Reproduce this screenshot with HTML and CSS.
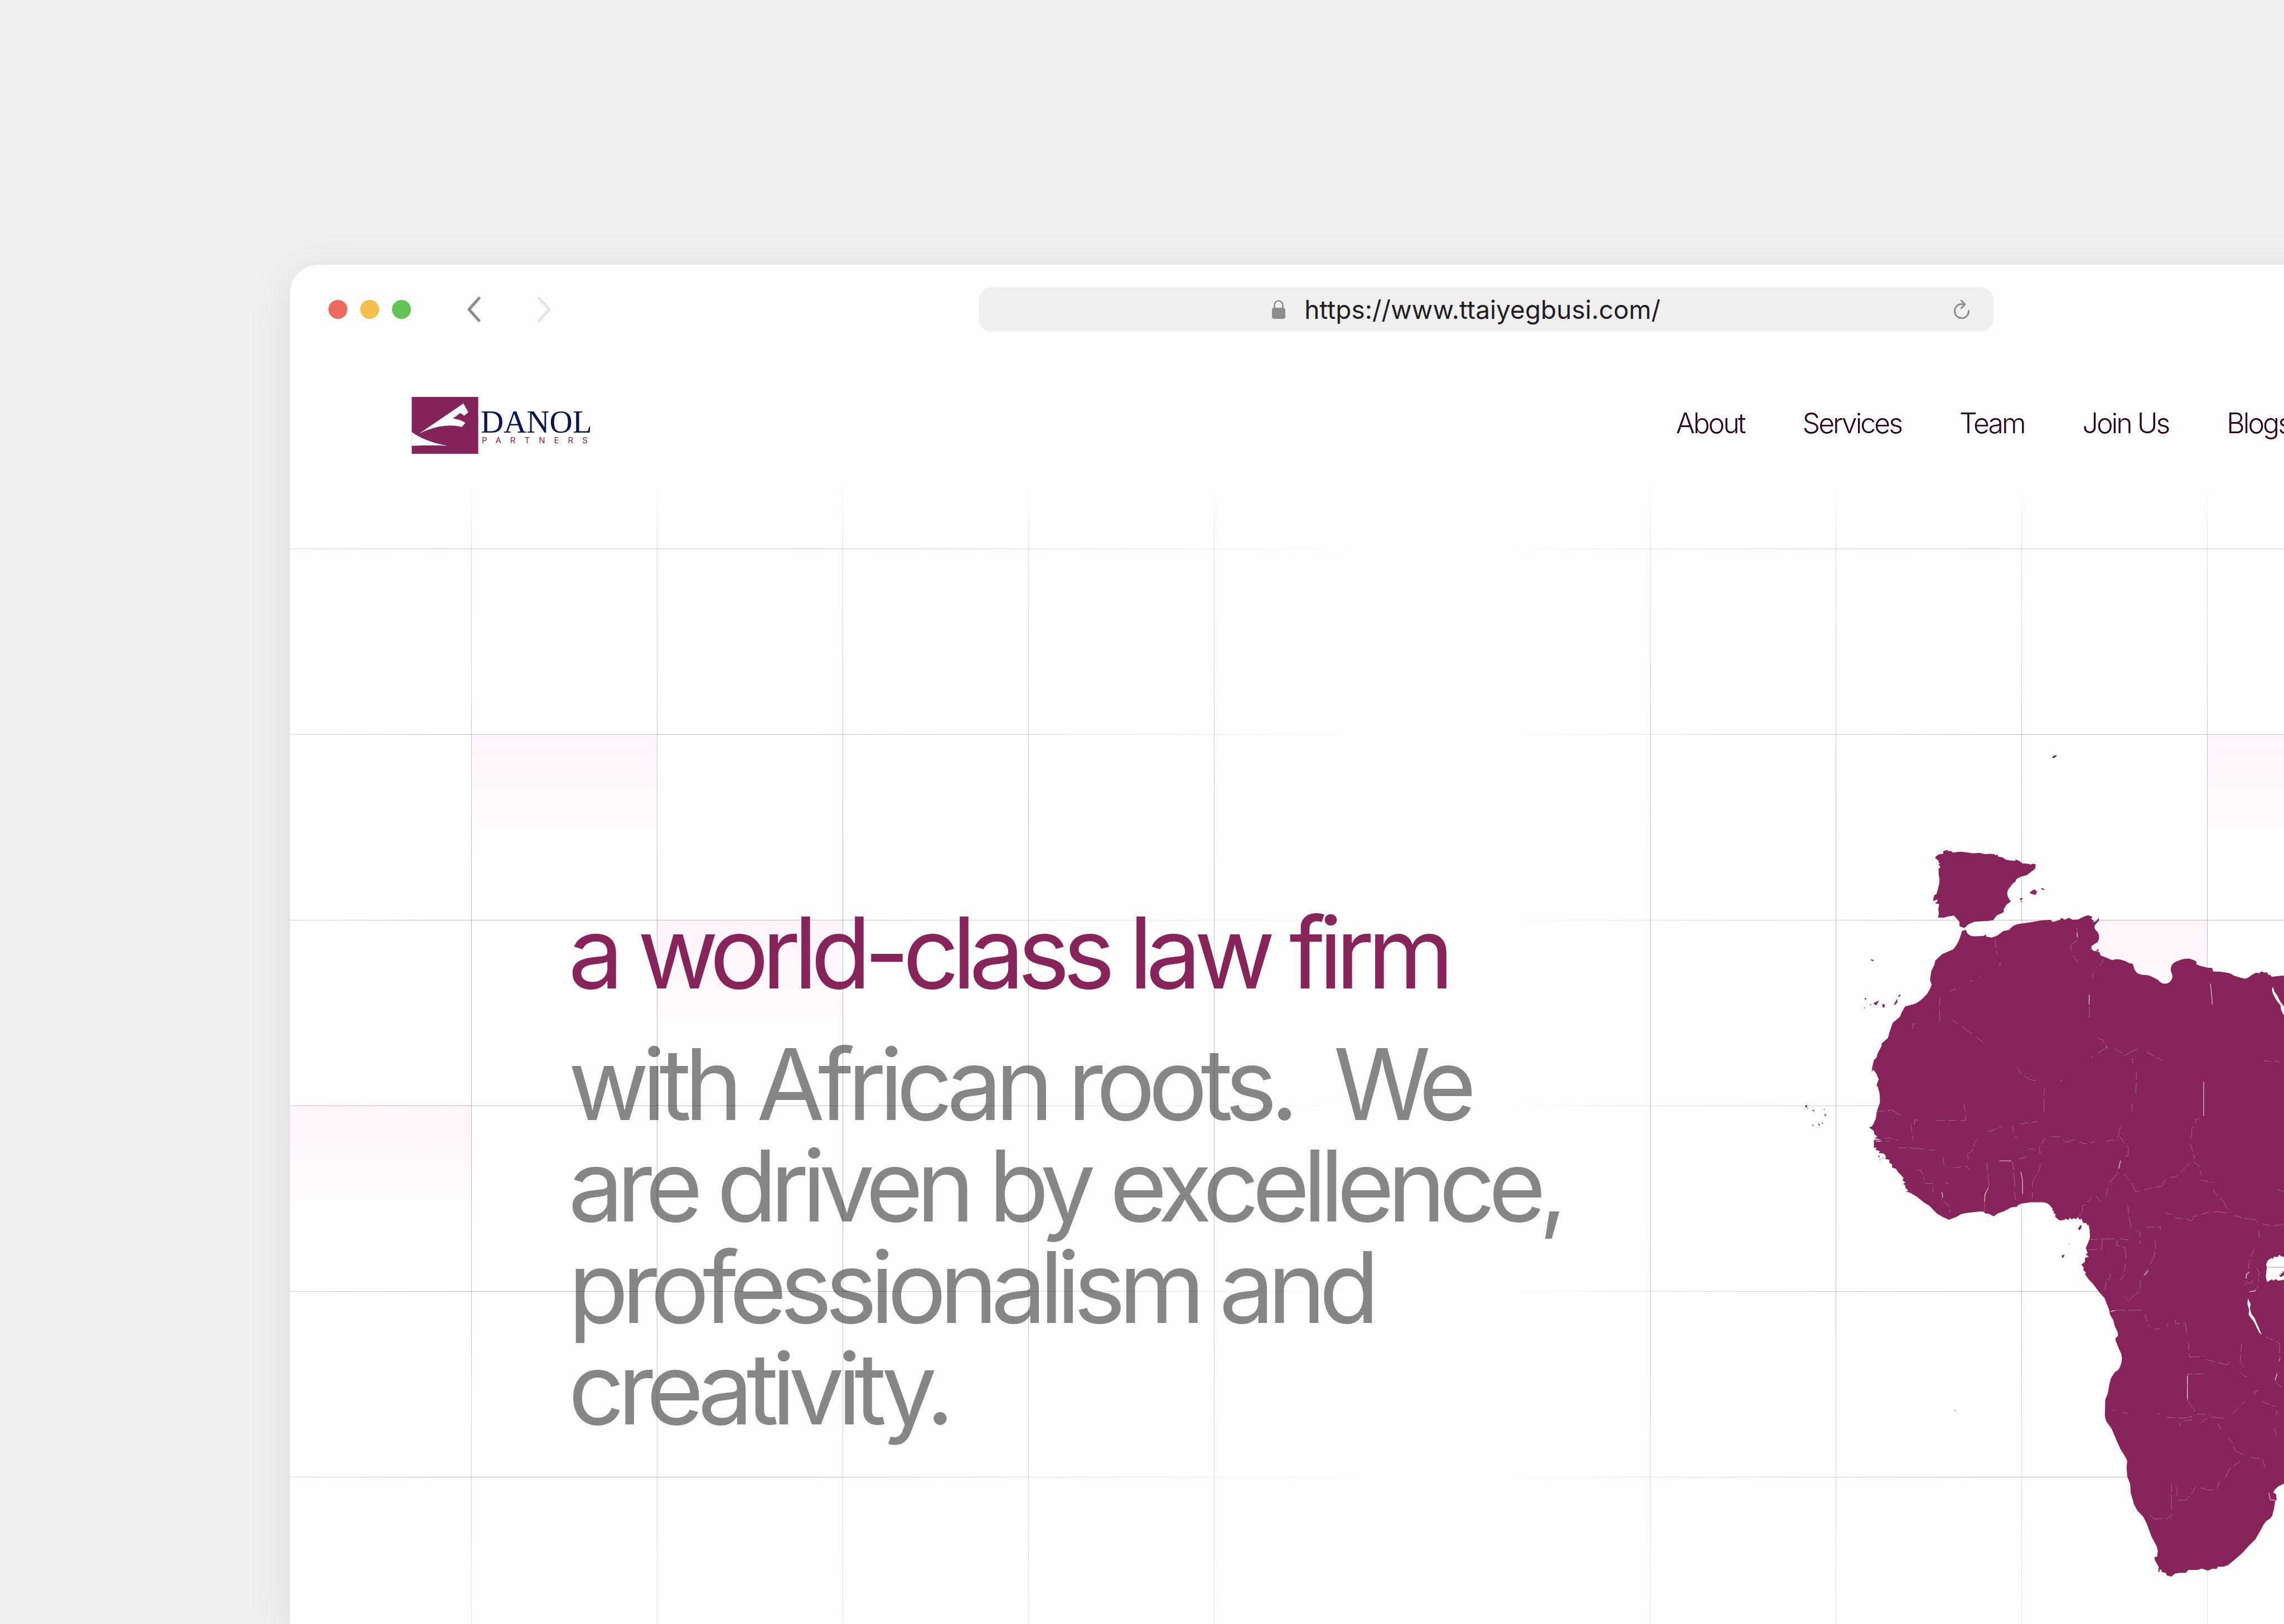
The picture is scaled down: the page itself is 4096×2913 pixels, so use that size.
FILE: index.html
```html
<!DOCTYPE html>
<html lang="en">
<head>
<meta charset="utf-8">
<title>Danol Partners</title>
<link rel="stylesheet" href="styles.css">
</head>
<body>
<div class="browser">
  <div class="toolbar">
    <div class="controls">
      <span class="light light-close"></span>
      <span class="light light-min"></span>
      <span class="light light-max"></span>
      <button class="chevron chevron-back" aria-label="Back">
        <svg viewBox="0 0 26 46" width="26" height="46"><path d="M22 3 4 23 22 43"/></svg>
      </button>
      <button class="chevron chevron-forward" aria-label="Forward">
        <svg viewBox="0 0 26 46" width="26" height="46"><path d="M4 3 22 23 4 43"/></svg>
      </button>
    </div>
    <div class="address">
      <div class="url">
        <svg class="lock" viewBox="0 0 24 34" width="24" height="34"><path d="M4.500 15V9.500a7.500 8 0 0 1 15 0V15" fill="none" stroke="#8d8d8d" stroke-width="2.600"/><rect y="14" width="24" height="20" rx="4" fill="#8d8d8d"/></svg>
        <span>https://www.ttaiyegbusi.com/</span>
      </div>
      <button class="reload" aria-label="Reload">
        <svg viewBox="0 0 28 34" width="28" height="34"><path d="M26.500 19.500A12.600 12.600 0 1 1 14 7.500L20 8M13.300 1.300 20 8l-6.700 6.700"/></svg>
      </button>
    </div>
  </div>

  <header class="header">
    <a class="logo" href="#">
      <svg viewBox="57 62 504 431" width="120" height="102">
        <path fill="#85245a" d="M57 62h504v431H57z"/>
        <path fill="#fff" d="M449 112 486 178 454 205 425 183 368 227C402 230 438 240 463 259L436 290C350 262 220 285 113 340ZM57 327C120 375 215 412 327 432 240 428 140 429 57 432Z"/>
      </svg>
      <span class="wordmark">
        <span class="wordmark-name">DANOL</span>
        <span class="wordmark-sub">PARTNERS</span>
      </span>
    </a>
    <nav class="nav">
      <a href="#">About</a>
      <a href="#">Services</a>
      <a href="#">Team</a>
      <a href="#">Join Us</a>
      <a href="#">Blogs</a>
    </nav>
  </header>

  <div class="backdrop">
    <div class="grid grid-left">
      <i class="cell cell-a"></i><i class="cell cell-b"></i><i class="cell cell-c"></i>
      <i class="rows"></i><i class="cols"></i>
    </div>
    <div class="grid grid-right">
      <i class="cell cell-d"></i><i class="cell cell-e"></i>
      <i class="rows"></i><i class="cols"></i>
    </div>
  </div>

  <main class="hero">
    <div class="hero-text">
      <h1>a world-class law firm</h1>
      <p>with African roots. &nbsp;We are driven by excellence, professionalism and creativity.</p>
    </div>
    <svg class="map" viewBox="0 0 1568 2700" role="img" aria-label="Map of Africa">
      <g fill="#87255b">
        <path d="M499 368 505 367 512 365 514 369 522 368 529 373 545 371 560 371 594 376 613 374 628 378 645 377 661 379 662 383 668 379 671 386 684 388 694 395 710 398 724 399 727 395 740 401 746 407 770 409 772 412 778 408 789 410 787 424 774 434 761 444 743 449 734 453 727 458 725 465 718 469 708 482Q696 494 701 510L705 519 711 526 696 538 688 553 689 560 666 571 655 586 638 588 597 590 578 598 565 610 550 605 549 590 543 583 532 571 512 574 500 578 482 577 485 565 483 550 486 535 475 533 474 529 480 528 480 520 468 526 467 518 471 506 477 504 480 495 486 470 487 457 484 440 484 425 490 417 483 412 488 408 483 403 485 400 478 394 473 390 475 386 484 379 498 377Z"/>
        <path d="M557 620 569 615 574 626C583 636 590 636 600 636L626 635 632 630 634 637 650 640C665 636 671 633 676 628L686 620 705 616C716 603 723 600 735 597L775 592 800 587 835 584 842 591 865 585 868 578 880 584 893 578 904 584 922 583 940 574 953 570 962 573 967 575 963 581 971 587 969 593 980 587 986 578 988 586 977 598C970 607 974 614 980 620 990 628 990 645 982 655L966 665C960 672 965 680 972 682L983 683 990 688 992 696 1010 703 1029 711C1045 704 1058 710 1070 714L1082 720 1092 722C1097 728 1096 738 1102 745 1110 758 1125 757 1140 758 1152 761 1162 767 1173 773 1182 785 1195 788 1206 782 1215 775 1220 765 1217 757L1213 745C1211 728 1220 718 1235 713 1252 706 1270 704 1280 709L1292 714 1294 725 1310 730 1330 735 1342 735 1346 747C1365 746 1385 749 1398 752L1412 760 1432 766 1446 769C1458 768 1464 757 1474 754L1480 750 1490 752 1497 746 1505 750 1514 749 1519 757 1524 757 1530 763 1568 759V2354L1550 2363 1540 2372 1534 2382 1543 2387 1545 2406 1540 2410 1537 2431 1531 2455 1525 2463 1512 2472 1503 2484 1495 2500 1478 2529 1455 2552 1438 2571 1413 2593 1392 2610 1378 2615 1360 2615 1357 2622 1343 2621 1330 2627 1310 2621 1297 2625 1268 2625 1260 2634 1240 2634 1225 2637 1215 2646 1200 2642 1197 2634 1185 2632 1183 2624 1177 2624 1178 2633 1173 2629 1175 2616 1163 2595 1161 2585 1170 2583 1172 2564 1168 2550 1152 2520 1142 2493 1138 2481 1126 2458 1108 2439 1097 2419 1092 2400 1087 2384 1085 2355 1076 2332 1074 2303 1076 2282 1070 2270 1055 2246 1043 2220 1027 2182 1010 2158Q1005 2145 1006 2130L1007 2090 1015 2071 1020 2042 1025 2023 1037 2004 1048 1997C1062 1976 1062 1952 1053 1938L1043 1914 1038 1899 1047 1890 1046 1879 1036 1857 1032 1840 1022 1824 1018 1805 1010 1786 1005 1772 988 1753 970 1729 955 1713 943 1696 947 1692 938 1684 940 1677 932 1667 943 1658 944 1645 955 1642 946 1634 952 1630 946 1615 954 1596 959 1582 958 1558 955 1542 950 1543 948 1536 938 1536 932 1521 928 1527 920 1517 918 1523 905 1521 903 1526 896 1519 892 1527 882 1522 880 1526 864 1528 850 1517 851 1507 844 1505 847 1498 841 1498 842 1490 838 1487C830 1473 815 1470 805 1471L775 1471 745 1475 733 1480 730 1485 712 1487 690 1499 670 1506 657 1515 642 1507 630 1506 625 1500 610 1500 575 1504 555 1508 540 1517 516 1526 495 1516 478 1506 455 1482 437 1471 415 1453 395 1441 381 1437 389 1435 380 1425 378 1416 372 1413 380 1409 371 1402 374 1395 366 1385 357 1377 350 1366 338 1362 338 1352 329 1346 330 1338 317 1335 318 1325 312 1318 295 1316 301 1311 286 1306 290 1300 281 1300 281 1275 305 1274 283 1270 292 1265 283 1258 280 1246 265 1236 272 1234 278 1228 287 1208 290 1185 300 1158 299 1130 293 1108 289 1104 296 1085 288 1066 279 1055 274 1062 276 1045 281 1024 290 1016 292 1005 305 980 305 973 325 955 332 930 340 908 363 888 368 875 379 856 410 848C435 835 456 812 462 787L457 773 461 745 470 727 474 712 495 692 530 677C545 660 552 640 557 620Z"/>
        <path d="M839 75 846 69 855 67 853 72 845 77ZM769 499 780 491 789 489 788 494 794 495 788 506 777 503ZM805 485 814 486 816 491 808 489ZM739 518 748 515 746 521 740 523ZM742 525h3v3h-3ZM271 708 281 711 279 714 272 712ZM251 829 257 831 255 838ZM249 860 253 859 252 863ZM268 849 273 849 271 853ZM279 846 298 837 288 853ZM306 852 313 848 316 856 311 861ZM343 851 354 832 355 842 349 850ZM356 827 361 819 366 821 360 826ZM978 678 987 677 985 684ZM65 1169 70 1165 72 1170 68 1175ZM72 1175h3v2h-3ZM87 1181 97 1183 90 1185ZM124 1176 127 1180 124 1182ZM126 1192 132 1197 127 1201ZM86 1228 91 1227 90 1233ZM105 1222 112 1227 109 1231ZM118 1221h3v4h-3ZM921 1555 928 1544 933 1543 932 1551 927 1559ZM871 1637 879 1636 876 1644 871 1646ZM894 1600 896 1602 895 1605ZM293 1325 301 1326 296 1330ZM298 1337 303 1336 299 1339ZM308 1327 310 1333 308 1336Z"/>
        <path d="M534 2123 536 2122 536 2126 534 2126Z"/>
      </g>
      <g fill="#fff">
        <path d="M1533 794 1530 804 1534 818 1545 838 1557 853 1559 867 1568 885V856L1557 842 1547 822 1538 810Z"/>
        <path d="M1518 1653 1528 1646 1533 1649 1536 1642 1548 1643 1553 1636 1560 1641 1568 1642V1688L1563 1688 1565 1693 1557 1694 1560 1698 1552 1700 1558 1706 1568 1700V1714L1550 1717 1542 1712 1535 1717 1530 1713 1515 1721 1511 1706 1514 1675 1512 1665Z"/>
        <path d="M1455 1772 1463 1791 1461 1805 1466 1822 1475 1833 1483 1852 1498 1886 1490 1880 1475 1848 1457 1824 1459 1808 1453 1790Z"/>
        <path d="M1021 1815 1030 1811 1043 1810 1028 1814Z"/>
      </g>
      <path d="M1480 1675H1568" stroke="#87255b" stroke-width="1"/>
      <g class="borders">
        <path d="M663 645 662 660 665 680 667 692M679 718 675 730M616 765 612 762M582 779 590 776M515 812 525 805 553 799M488 830 487 865 488 905M403 928 403 912 415 911M525 898 590 943 632 976M918 612 920 635 917 650 900 662 898 675 908 700 928 724M1000 707 998 720 978 736M968 750 967 770M957 820 957 890M983 955 1000 962 1012 985 962 1017M1038 990 1070 1010 1090 998 1110 989M1137 1000 1188 1026M1092 1018 1093 1035M1105 1060 1103 1130M1091 1160 1090 1190M1506 1023 1507 1028 1548 1028 1553 1033M1305 1208 1292 1210 1290 1225 1279 1240 1278 1262 1271 1275 1278 1300 1288 1335M730 1048 745 1070 770 1085 790 1090M865 1095 872 1085M817 1109 815 1125 815 1190M563 1160 570 1200 568 1215 550 1215M540 1214 475 1214M420 1214 410 1212 408 1230M288 1186 340 1182 358 1195 370 1205M397 1225 403 1275M640 1250 685 1232M716 1228 718 1250 725 1265 735 1272M605 1273 596 1285 594 1305 575 1320 577 1335 570 1355 580 1368M740 1225 795 1217M765 1305 780 1303 795 1318M738 1335 765 1328M635 1345 642 1420 630 1445 628 1500M716 1343 722 1400 723 1450 728 1470M805 1350 798 1375 785 1395 778 1410 778 1460M803 1320 800 1300 820 1267M838 1265 862 1265 885 1283 910 1275 935 1285 950 1288 975 1280M1010 1280 1035 1275 1050 1262 1049 1250 1058 1230M1053 1265 1070 1290 1080 1300 1078 1325 1060 1330M1055 1340 1045 1380 1020 1410 1008 1455M1065 1382 1090 1410 1102 1438 1145 1428 1185 1420 1195 1400 1235 1388 1250 1370 1280 1340 1300 1355 1308 1385M1305 1402 1345 1408M1348 1430 1350 1440 1380 1470 1385 1485 1400 1500M358 1300 400 1300 470 1308M284 1279 330 1279M315 1272 330 1268 355 1278M498 1330 500 1350 508 1365M530 1363 570 1358M440 1412 465 1412 468 1440M492 1440 497 1452 492 1465M500 1468 518 1482 519 1503M935 1500 935 1485 965 1455M978 1452 992 1470M925 1517 931 1505M1078 1480 1080 1510 1088 1550M1198 1505 1215 1510M1225 1520 1260 1524 1278 1530 1285 1515 1330 1503 1360 1500 1400 1506M1410 1512 1450 1523 1475 1525 1490 1537 1530 1545 1568 1540M1548 1430 1568 1438M505 1410 515 1412M415 1370 430 1372 440 1400"/>
        <path d="M958 1588 1045 1585 1090 1590M955 1620 995 1619 998 1588M1045 1590 1042 1606 1068 1612 1074 1650 1070 1667 1065 1700 1055 1715M1012 1715 1022 1708 1024 1695M1010 1720 1005 1750M1135 1549 1180 1549 1180 1558M1108 1558 1117 1570 1117 1601M1162 1590 1165 1610 1160 1642 1140 1680 1125 1705M1118 1715 1115 1748 1095 1765 1080 1781M1072 1770 1075 1780M1043 1810 1128 1810 1137 1840 1147 1862M1160 1870 1180 1867M1202 1862 1204 1850M1225 1840 1228 1852 1258 1850 1263 1880M1268 1910 1272 1957 1320 1955M1325 1965 1370 1977 1390 1981 1397 1972 1410 1988M1435 1914 1430 1971 1442 1990M1432 2005 1445 2018 1460 2018M1315 2010 1265 2010 1265 2094 1280 2115 1295 2135M1028 2127 1038 2122M1060 2132 1080 2133M1170 2134 1178 2137M1200 2146 1250 2149 1290 2142M1240 2175 1240 2160M1255 2157 1285 2153M1295 2136 1335 2138M1308 2165 1320 2152 1345 2145 1385 2151M1360 2165 1370 2185M1390 2209 1402 2220 1415 2251 1450 2267M1465 2272 1500 2277 1508 2303M1430 2284 1405 2303 1395 2310 1385 2335M1365 2345 1358 2370 1330 2375 1292 2362 1275 2390 1260 2406 1232 2406 1232 2365M1215 2355 1215 2455 1200 2464 1160 2465 1143 2446M1408 2132 1425 2115 1445 2095M1498 2096 1540 2113M1538 2180 1545 2208M1545 2124 1545 2137M1490 2061 1475 2066 1480 2080M1510 1893 1555 1914 1553 1971 1558 1950M1546 2002 1546 2015 1538 2028 1546 2040 1560 2052M1490 1558 1490 1580 1500 1590M1475 1618 1466 1635 1457 1667 1458 1680M1448 1710 1450 1692 1461 1685M1443 1725 1450 1732M1450 1722 1465 1725 1472 1708M1482 1677 1490 1690 1488 1720M1488 1734 1478 1745 1465 1765"/>
      </g>
      <g class="borders borders-strong">
        <path d="M1337 785 1341 820 1343 850M1316 1093V1200M675 1341 712 1341M742 1375 747 1400 748 1445M640 1426 630 1445 628 1470M957 820 956 850M918 625 920 640M1460 1752 1480 1748M1130 1700 1142 1686M1055 1340 1050 1365M495 1440 497 1455M1449 1710 1451 1697 1460 1690M1546 2010 1540 2030M1265 2015V2090M1520 2382 1525 2405 1542 2407M287 1279 303 1279M1010 984 1013 985"/>
      </g>
    </svg>
  </main>
</div>
</body>
</html>
```
FILE: styles.css
```css
* {
  box-sizing: border-box;
}

html,
body {
  margin: 0;
  min-height: 100%;
}

body {
  background: #f0f0f0;
  font-family: "Inter", "Liberation Sans", sans-serif;
  height: 100vh;
  overflow: hidden;
  padding: 475px 0 0 520px;
}

a {
  color: inherit;
  text-decoration: none;
}

button {
  border: 0;
  padding: 0;
  background: none;
  display: flex;
}

svg {
  display: block;
}

/* The window bleeds off the right edge so its shadow stays even */
.browser {
  position: relative;
  height: 100%;
  margin-right: -120px;
  padding-right: 120px;
  background: #fefefe;
  border-radius: 50px 0 0 0;
  box-shadow: 0 14px 80px rgba(0, 0, 0, 0.1);
}

.toolbar {
  display: grid;
  grid-template-columns: 1235px 1820px 1fr;
  align-items: center;
  height: 160px;
}

.controls {
  display: flex;
  align-items: center;
  padding-left: 69px;
}

.light {
  width: 34px;
  height: 34px;
  margin-right: 23px;
  border-radius: 50%;
}

.light-close {
  background: #ec6a5e;
}

.light-min {
  background: #f4bf4f;
}

.light-max {
  background: #61c554;
}

.chevron path {
  fill: none;
  stroke: #8d8d8d;
  stroke-width: 5;
  stroke-linecap: round;
  stroke-linejoin: round;
}

.chevron-back {
  margin-left: 77px;
}

.chevron-forward {
  margin-left: 100px;
}

.chevron-forward path {
  stroke: #e5e5e5;
}

.address {
  display: flex;
  align-items: center;
  height: 80px;
  padding-right: 43px;
  border-radius: 24px;
  background: #f0f0f0;
}

.url {
  flex: 1;
  display: flex;
  align-items: center;
  justify-content: center;
  gap: 34px;
  color: #1f2124;
  font-size: 46px;
  line-height: 56px;
}

.reload path {
  fill: none;
  stroke: #8d8d8d;
  stroke-width: 3;
  stroke-linecap: round;
  stroke-linejoin: round;
}

.header {
  position: relative;
  z-index: 1;
  display: flex;
  align-items: center;
  justify-content: space-between;
  padding: 77px 0 0 218px;
}

.logo {
  display: flex;
  gap: 4px;
}

.wordmark {
  display: flex;
  flex-direction: column;
  padding-top: 19px;
}

.wordmark-name {
  color: #0c1550;
  font-family: "Liberation Serif", serif;
  font-size: 57px;
  line-height: 52px;
}

.wordmark-sub {
  color: #85245a;
  font-size: 15px;
  line-height: 14px;
  letter-spacing: 16px;
  padding-left: 2px;
}

.nav {
  display: flex;
  gap: 104px;
  margin-right: -12px;
  color: #2c0419;
  font-size: 50px;
  font-weight: 300;
  line-height: 60px;
  letter-spacing: -0.06em;
  padding-bottom: 8px;
}

/* Grid paper behind the hero */
.backdrop {
  position: absolute;
  inset: 160px 0 0 0;
  overflow: hidden;
}

.grid {
  position: absolute;
  top: 16px;
  bottom: 0;
}

.grid-left {
  left: -8px;
  width: 2000px;
}

.grid-right {
  left: 2439px;
  right: 0;
}

.rows,
.cols {
  position: absolute;
  inset: 0;
}

.rows {
  background: repeating-linear-gradient(to bottom, rgba(0, 0, 0, 0.26) 0 1px, transparent 1px 333px);
}

.cols {
  background: repeating-linear-gradient(to right, rgba(0, 0, 0, 0.26) 0 1px, transparent 1px 333px);
  mask-image: linear-gradient(to bottom, transparent 220px, rgba(0, 0, 0, 0.5) 330px, #000 900px, #000 1500px, rgba(0, 0, 0, 0.4));
}

.grid-left .cols {
  right: 330px;
}

.grid-left .rows {
  top: 333px;
  mask-image: linear-gradient(to right, rgba(0, 0, 0, 0.6), #000 300px, #000 900px, transparent 1950px);
}

.grid-right .rows {
  top: 333px;
  left: -260px;
  mask-image: linear-gradient(to right, transparent, rgba(0, 0, 0, 0.5) 300px, #000 900px);
}

.cell {
  position: absolute;
  width: 333px;
  height: 240px;
  background: linear-gradient(#fff4fa, #fefefe);
}

.cell-a {
  left: 333px;
  top: 668px;
}

.cell-b {
  left: 666px;
  top: 1000px;
}

.cell-c {
  left: 0;
  top: 1331px;
}

.cell-d {
  left: 999px;
  top: 668px;
}

.cell-e {
  left: 666px;
  top: 1000px;
}

.hero {
  position: relative;
  display: grid;
  grid-template-columns: 1820px 1fr;
  column-gap: 361px;
  padding: 502px 0 0 499px;
  align-items: start;
}

.hero-text {
  padding-top: 302px;
  font-size: 177px;
  line-height: 182px;
  letter-spacing: -0.07em;
}

h1 {
  margin: 0 0 54px;
  color: #87255b;
  font: inherit;
}

p {
  margin: 0;
  color: rgba(0, 0, 0, 0.47);
}

.map {
  width: 100%;
  height: auto;
}

.borders {
  fill: none;
  stroke: #fff;
  stroke-width: 1;
  stroke-dasharray: 26 10 44 16;
  opacity: 0.5;
}

.borders-strong {
  stroke-width: 2;
  stroke-dasharray: none;
  opacity: 0.8;
}
```
